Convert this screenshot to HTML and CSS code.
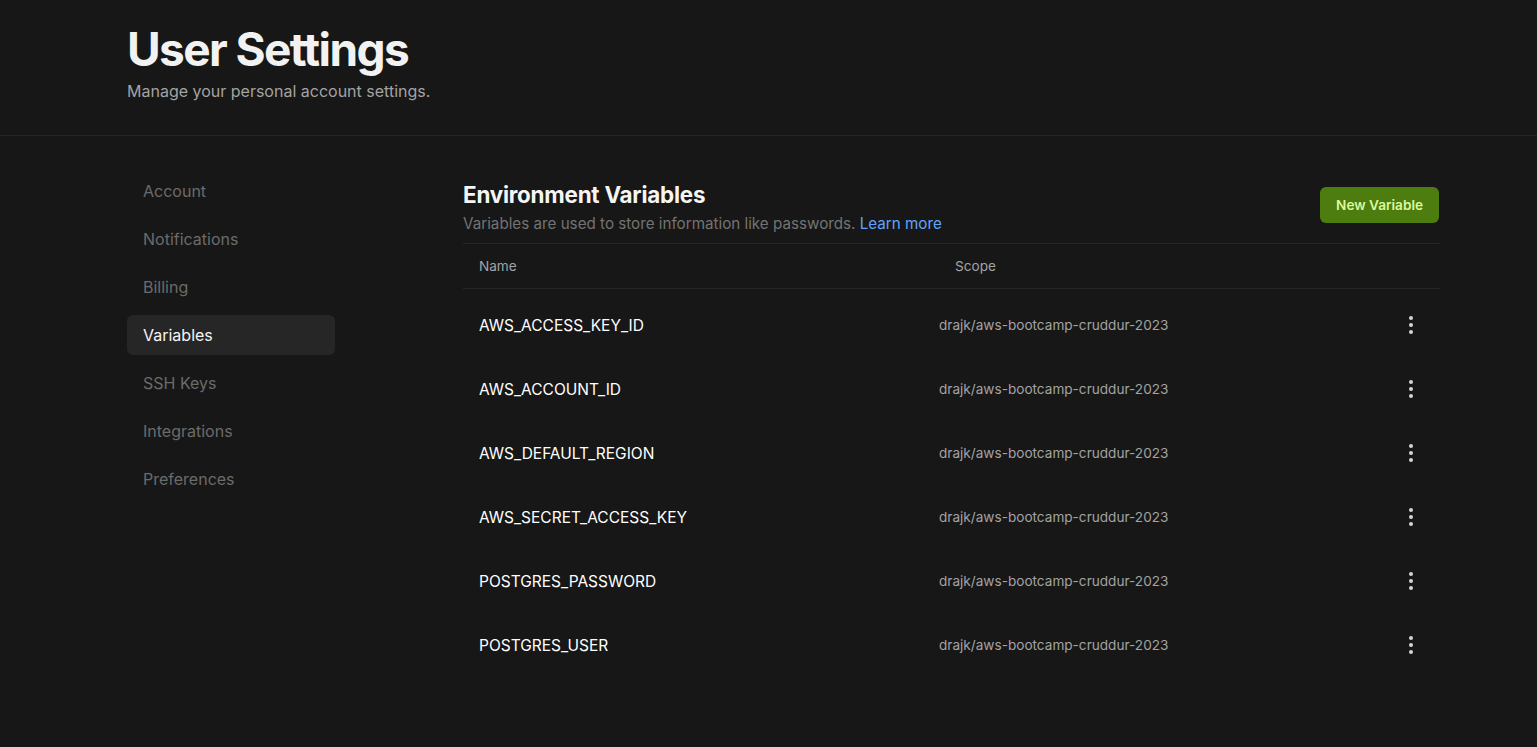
FILE: index.html
```html
<!DOCTYPE html>
<html lang="en">
<head>
<meta charset="utf-8">
<title>User Settings</title>
<link rel="stylesheet" href="styles.css">
</head>
<body>
<header class="page-header">
  <div class="header-inner">
    <h1 class="page-title">User Settings</h1>
    <p class="page-subtitle">Manage your personal account settings.</p>
  </div>
</header>
<div class="layout">
  <nav class="sidebar">
    <a class="nav-item">Account</a>
    <a class="nav-item">Notifications</a>
    <a class="nav-item">Billing</a>
    <a class="nav-item active">Variables</a>
    <a class="nav-item">SSH Keys</a>
    <a class="nav-item">Integrations</a>
    <a class="nav-item">Preferences</a>
  </nav>
  <main class="main">
    <div class="section-head">
      <div>
        <h2 class="section-title">Environment Variables</h2>
        <p class="section-desc">Variables are used to store information like passwords. <a class="link">Learn more</a></p>
      </div>
      <button class="btn-primary">New Variable</button>
    </div>
    <div class="table">
      <div class="thead">
        <div class="th th-name">Name</div>
        <div class="th th-scope">Scope</div>
      </div>
      <div class="tbody">
        <div class="row"><div class="cell-name">AWS_ACCESS_KEY_ID</div><div class="cell-scope">drajk/aws-bootcamp-cruddur-2023</div><div class="cell-menu"><span class="dots"><i></i><i></i><i></i></span></div></div>
        <div class="row"><div class="cell-name">AWS_ACCOUNT_ID</div><div class="cell-scope">drajk/aws-bootcamp-cruddur-2023</div><div class="cell-menu"><span class="dots"><i></i><i></i><i></i></span></div></div>
        <div class="row"><div class="cell-name">AWS_DEFAULT_REGION</div><div class="cell-scope">drajk/aws-bootcamp-cruddur-2023</div><div class="cell-menu"><span class="dots"><i></i><i></i><i></i></span></div></div>
        <div class="row"><div class="cell-name">AWS_SECRET_ACCESS_KEY</div><div class="cell-scope">drajk/aws-bootcamp-cruddur-2023</div><div class="cell-menu"><span class="dots"><i></i><i></i><i></i></span></div></div>
        <div class="row"><div class="cell-name">POSTGRES_PASSWORD</div><div class="cell-scope">drajk/aws-bootcamp-cruddur-2023</div><div class="cell-menu"><span class="dots"><i></i><i></i><i></i></span></div></div>
        <div class="row"><div class="cell-name">POSTGRES_USER</div><div class="cell-scope">drajk/aws-bootcamp-cruddur-2023</div><div class="cell-menu"><span class="dots"><i></i><i></i><i></i></span></div></div>
      </div>
    </div>
  </main>
</div>
</body>
</html>
```

FILE: styles.css
```css
* { box-sizing: border-box; }
html, body { margin: 0; padding: 0; }
body {
  background: #171717;
  color: #f5f5f5;
  font-family: Inter, "Liberation Sans", sans-serif;
  min-height: 747px;
}
.page-header {
  border-bottom: 1px solid #262626;
  height: 136px;
}
.header-inner {
  padding: 22px 0 0 127px;
}
.page-title {
  margin: 0;
  font-size: 46px;
  line-height: 54px;
  font-weight: 700;
  letter-spacing: -0.035em;
  color: #f2f2f2;
}
.page-subtitle {
  margin: 4px 0 0;
  font-size: 16px;
  line-height: 22px;
  color: #a3a3a3;
}
.layout {
  display: flex;
  padding: 35px 0 0 127px;
  gap: 128px;
}
.sidebar {
  width: 208px;
  display: flex;
  flex-direction: column;
  gap: 8px;
}
.nav-item {
  display: block;
  height: 40px;
  line-height: 40px;
  padding: 0 16px;
  border-radius: 6px;
  font-size: 16px;
  color: #6b6b6b;
}
.nav-item.active {
  background: #262626;
  color: #f5f5f5;
}
.main {
  width: 977px;
}
.section-head {
  display: flex;
  justify-content: space-between;
  align-items: flex-start;
  padding-top: 10px;
  padding-bottom: 9px;
  border-bottom: 1px solid #262626;
}
.section-title {
  margin: 0;
  font-size: 22.4px;
  line-height: 28px;
  font-weight: 700;
  letter-spacing: -0.01em;
  color: #f5f5f5;
}
.section-desc {
  margin: 5px 0 0;
  font-size: 15.2px;
  line-height: 20px;
  color: #737373;
}
.link { color: #60a5fa; }
.btn-primary {
  margin-top: 6px;
  margin-right: 1px;
  height: 36px;
  padding: 0 16px;
  border: none;
  border-radius: 6px;
  background: #4d7c0f;
  color: #d9f99d;
  font-family: inherit;
  font-size: 13.6px;
  font-weight: 600;
}
.thead {
  display: flex;
  height: 45px;
  align-items: center;
  border-bottom: 1px solid #262626;
  font-size: 13.6px;
  color: #a3a3a3;
}
.th-name { width: 492px; padding-left: 16px; }
.th-scope { flex: 1; }
.tbody { padding-top: 4px; }
.row {
  display: flex;
  align-items: center;
  height: 64px;
}
.cell-name {
  width: 476px;
  padding-left: 16px;
  font-size: 15.5px;
  color: #ffffff;
}
.cell-scope {
  flex: 1;
  font-size: 13.6px;
  color: #a3a3a3;
}
.cell-menu {
  width: 58px;
  display: flex;
  justify-content: center;
}
.dots {
  display: flex;
  flex-direction: column;
  gap: 3px;
}
.dots i {
  display: block;
  width: 4px;
  height: 4px;
  border-radius: 50%;
  background: #d4d4d4;
}
```
